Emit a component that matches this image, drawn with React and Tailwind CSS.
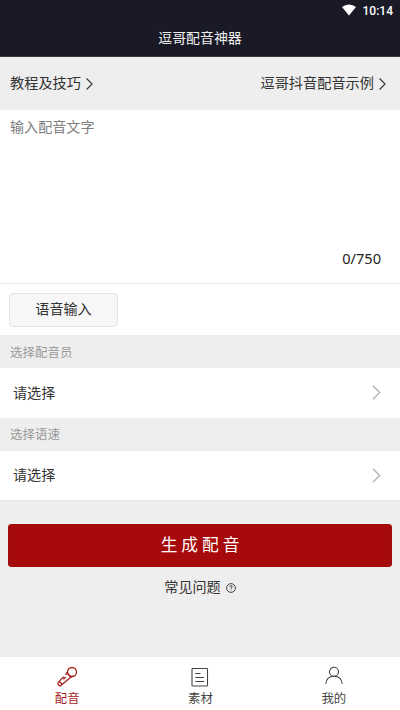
import React, { useState } from "react";

const Chevron = ({ className, strokeWidth = 1.3 }) => (
  <svg viewBox="0 0 8 14" fill="none" stroke="currentColor" strokeWidth={strokeWidth} className={className}>
    <path d="M0.6 0.6 L7 7 L0.6 13.4" />
  </svg>
);

const MicIcon = () => (
  <svg width="22" height="22" viewBox="0 0 22 22" fill="none" stroke="currentColor" strokeWidth="1.3">
    <circle cx="16" cy="6" r="4.5" />
    <path d="M10.4 6.2 L15.8 11.6" />
    <path d="M11 7.2 L9.4 8.9 M7.8 10.6 L2.3 16.3 Q1.4 17.5 2.3 18.5 L3.2 19.4 Q4.2 20.2 5.2 19.3 L15 10.9" />
    <path d="M9.6 11 L7.4 13.3 M3.2 15.6 L6.3 18.3" />
  </svg>
);

const DocIcon = () => (
  <svg width="22" height="22" viewBox="0 0 22 22" fill="none" stroke="currentColor" strokeWidth="1.1">
    <rect x="3" y="2.5" width="15.5" height="17.5" rx="0.8" />
    <path d="M6.3 7.5 H11.5 M6.3 11.5 H15 M6.3 15.5 H15" />
  </svg>
);

const UserIcon = () => (
  <svg width="22" height="22" viewBox="0 0 22 22" fill="none" stroke="currentColor" strokeWidth="1.1">
    <circle cx="11" cy="5.8" r="4.5" />
    <path d="M2.8 18 C3.2 13.3 6.4 10.3 11 10.3 C15.6 10.3 18.8 13.3 19.2 18" />
  </svg>
);

const tabs = [
  { name: "配音", icon: MicIcon },
  { name: "素材", icon: DocIcon },
  { name: "我的", icon: UserIcon },
];

const SelectRow = ({ label }) => (
  <>
    <div className="h-[33px] px-[10px] pt-[3px] flex items-center text-[12.5px] text-[#999]">{label}</div>
    <button className="w-full h-[49.5px] bg-white pl-[13px] pr-[19px] flex items-center justify-between text-[14.1px] text-[#333]">
      <span className="pb-px">请选择</span>
      <Chevron className="w-[9px] h-[15px] text-[#b5b5b5]" />
    </button>
  </>
);

const App = () => {
  const [text, setText] = useState("");
  const [activeTab, setActiveTab] = useState("配音");

  return (
    <div className="w-full h-[710px] flex flex-col overflow-hidden bg-[#eeeeee] text-[#333] font-['Noto_Sans','Noto_Sans_CJK_SC',sans-serif]">
      {/* Status bar and title */}
      <header className="h-[57px] shrink-0 bg-[#1a1a26] border-b border-[#3b3b46] text-white">
        <div className="h-[21px] pt-px pr-[7px] flex items-center justify-end gap-[7px]">
          <svg width="14" height="12" viewBox="0 0 14 12" fill="currentColor" className="mb-[2px]">
            <path d="M7 11.5 L0 3 Q3 0.5 7 0.5 Q11 0.5 14 3 Z" />
          </svg>
          <span className="font-[Roboto,sans-serif] font-medium text-[12px] leading-none">10:14</span>
        </div>
        <h1 className="h-[35px] flex items-center justify-center text-[13.9px] text-[#f0f0f0]">逗哥配音神器</h1>
      </header>

      {/* Links */}
      <div className="h-[53px] shrink-0 pl-[10px] pr-[14px] pb-px flex items-center justify-between text-[14.2px]">
        <button className="flex items-center gap-[5px]">
          教程及技巧
          <Chevron className="w-[7px] h-[12px] mt-[2px]" />
        </button>
        <button className="flex items-center gap-[5px]">
          逗哥抖音配音示例
          <Chevron className="w-[7px] h-[12px] mt-[2px]" />
        </button>
      </div>

      {/* Text input */}
      <div className="h-[174px] shrink-0 bg-white border-b border-[#eeeeee] flex flex-col">
        <textarea
          value={text}
          maxLength={750}
          onChange={(e) => setText(e.target.value)}
          placeholder="输入配音文字"
          className="flex-1 w-full px-[10px] pt-[6px] resize-none outline-none text-[14.1px] leading-[21px] placeholder:text-[#808080]"
        />
        <div className="h-[36px] shrink-0 pr-[19px] text-right text-[14.6px] leading-[22px] text-[#222]">{text.length}/750</div>
      </div>
      <div className="h-[51px] shrink-0 bg-white px-[9px] pt-[9px]">
        <button className="w-[109px] h-[34px] pb-[3px] rounded-[4px] border border-[#e4e4e4] bg-[#f7f7f7] text-[14.1px] leading-[28px]">
          语音输入
        </button>
      </div>

      <SelectRow label="选择配音员" />
      <SelectRow label="选择语速" />

      {/* Submit */}
      <div className="flex-1 px-2 pt-[23px] border-t border-[#e6e6e6]">
        <button className="w-full h-[43px] rounded-[3px] border border-[#9c0a0a] bg-[#a70a0a] text-white text-[16.7px] tracking-[4px] pl-[4px] pb-px leading-[38px]">
          生成配音
        </button>
        <div className="mt-[9px] flex items-center justify-center gap-[5px] text-[14.1px] leading-[21px]">
          <span>常见问题</span>
          <svg width="10" height="10" viewBox="0 0 10 10" fill="none" stroke="currentColor" strokeWidth="0.9" className="mt-[2px]">
            <circle cx="5" cy="5" r="4.4" />
            <path d="M3.7 4 Q3.8 2.7 5 2.7 Q6.3 2.8 6.3 3.9 Q6.2 4.6 5 5.2 V5.9 M5 6.7 V7.5" />
          </svg>
        </div>
      </div>

      {/* Tab bar */}
      <nav className="h-[53px] shrink-0 bg-white flex">
        {tabs.map(({ name, icon: Icon }) => (
          <button
            key={name}
            onClick={() => setActiveTab(name)}
            className={`flex-1 pt-[9px] pl-px flex flex-col items-center text-[12.4px] leading-[22px] ${
              activeTab === name ? "text-[#a81e1e]" : "text-[#444]"
            }`}
          >
            <Icon />
            <span>{name}</span>
          </button>
        ))}
      </nav>
    </div>
  );
};

export default App;
